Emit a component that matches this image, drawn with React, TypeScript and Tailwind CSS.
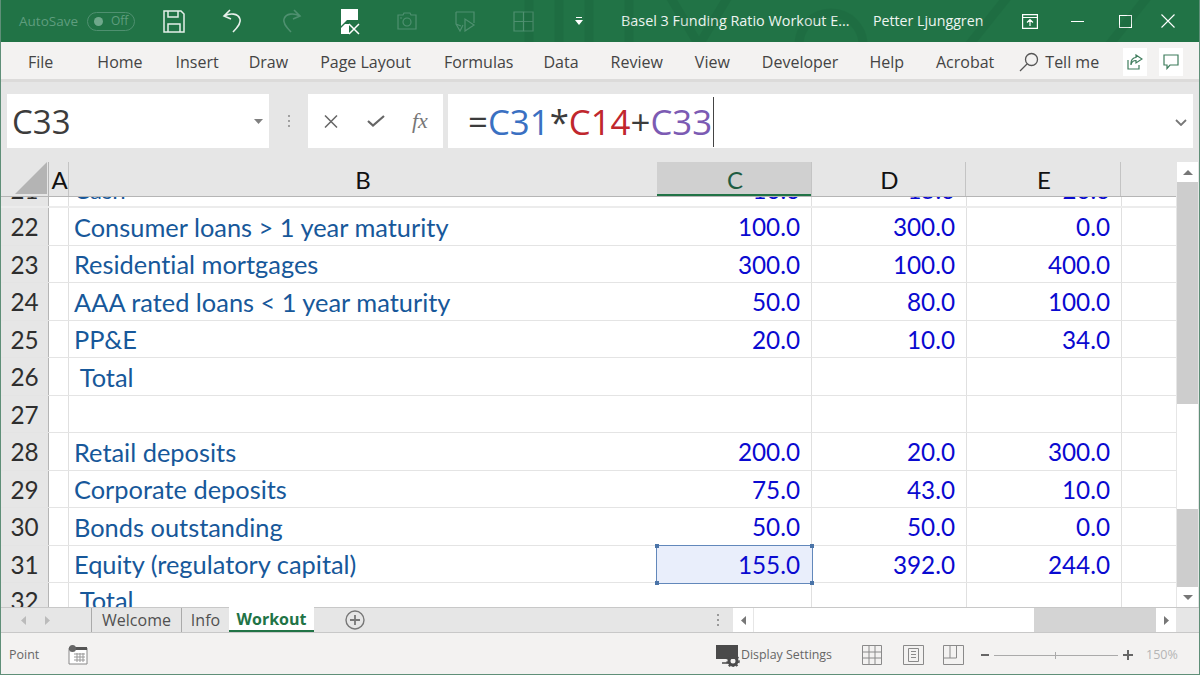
const uiFont = "font-['Open_Sans',sans-serif]";
const cellFont = "font-['Lato',sans-serif]";

const tabs = [
  { label: "File", gap: "mr-[44px]" },
  { label: "Home", gap: "mr-[33px]" },
  { label: "Insert", gap: "mr-[30px]" },
  { label: "Draw", gap: "mr-[32px]" },
  { label: "Page Layout", gap: "mr-[33px]" },
  { label: "Formulas", gap: "mr-[30px]" },
  { label: "Data", gap: "mr-[32px]" },
  { label: "Review", gap: "mr-[32px]" },
  { label: "View", gap: "mr-[32px]" },
  { label: "Developer", gap: "mr-[31px]" },
  { label: "Help", gap: "mr-[32px]" },
  { label: "Acrobat", gap: "mr-[25px]" },
];

const rows = [
  { n: "22", b: "Consumer loans > 1 year maturity", c: "100.0", d: "300.0", e: "0.0" },
  { n: "23", b: "Residential mortgages", c: "300.0", d: "100.0", e: "400.0" },
  { n: "24", b: "AAA rated loans < 1 year maturity", c: "50.0", d: "80.0", e: "100.0" },
  { n: "25", b: "PP&E", c: "20.0", d: "10.0", e: "34.0" },
  { n: "26", b: " Total", c: "", d: "", e: "" },
  { n: "27", b: "", c: "", d: "", e: "" },
  { n: "28", b: "Retail deposits", c: "200.0", d: "20.0", e: "300.0" },
  { n: "29", b: "Corporate deposits", c: "75.0", d: "43.0", e: "10.0" },
  { n: "30", b: "Bonds outstanding", c: "50.0", d: "50.0", e: "0.0" },
  { n: "31", b: "Equity (regulatory capital)", c: "155.0", d: "392.0", e: "244.0", selected: true },
];

function TitleBar() {
  return (
    <div className="relative flex h-[42px] shrink-0 items-center overflow-hidden bg-[#217346] text-white">
      <svg className="absolute right-0 top-0 h-[42px] w-[700px] opacity-[0.12]" viewBox="0 0 700 42" fill="none" stroke="#0d4a2a" strokeWidth="9">
        <path d="M30 -5v50M60 -5v50M90 -5v50M130 -5v50M170 -5l30 50l30 -50M300 45a32 32 0 0 1 64 0M470 45l40 -50M610 45l40 -50" />
      </svg>
      <span className="ml-[18px] w-[64px] text-[13.5px] text-[#5f9d7e]">AutoSave</span>
      <div className="ml-[4px] flex h-[19px] w-[48px] items-center rounded-full border border-[#4f9070] pl-[6px]">
        <span className="h-[9px] w-[9px] rounded-full bg-[#6fa88b]" />
        <span className="ml-[8px] text-[12px] leading-none text-[#5f9d7e]">Off</span>
      </div>
      <svg className="ml-[28px] h-[23px] w-[22px]" viewBox="0 0 22 23" fill="none" stroke="#e4efe9" strokeWidth="1.5">
        <path d="M1 1h17l3 3v18H1z" />
        <path d="M5 1v6h10V1M5 22v-8h12v8" />
      </svg>
      <svg className="ml-[37px] h-[26px] w-[22px]" viewBox="0 0 22 26" fill="none" stroke="#e8f1ec" strokeWidth="1.6">
        <path d="M8 2L2 8l7 3M2 8c6-3 14-3 16 3c1.500 4-3 9-7 13" />
      </svg>
      <svg className="ml-[36px] h-[26px] w-[22px]" viewBox="0 0 22 26" fill="none" stroke="#4f9070" strokeWidth="1.6">
        <path d="M14 2l6 6l-7 3M20 8c-6-3-14-3-16 3c-1.500 4 3 9 7 13" />
      </svg>
      <svg className="ml-[38px] h-[27px] w-[21px]" viewBox="0 0 21 27">
        <path d="M1 1h17v11H7L1 18zM1 20l4-4h4v10H1z" fill="#ffffff" />
        <path d="M9 16l10 10M19 16L9 26" stroke="#ffffff" strokeWidth="1.5" />
      </svg>
      <svg className="ml-[36px] h-[20px] w-[20px]" viewBox="0 0 20 20" fill="none" stroke="#4f9070" strokeWidth="1.2">
        <path d="M1 4h5l1-2h6l1 2h5v14H1z" />
        <circle cx="10" cy="11" r="4" />
        <path d="M3 7h2" />
      </svg>
      <svg className="ml-[38px] h-[21px] w-[21px]" viewBox="0 0 21 21" fill="none" stroke="#4f9070" strokeWidth="1.2">
        <path d="M1 1h18v11M1 1v12l5 2M1 13l4 7l3-6M10 8v12l9-6z" />
      </svg>
      <svg className="ml-[37px] h-[21px] w-[21px]" viewBox="0 0 21 21" fill="none" stroke="#4f9070" strokeWidth="1.2">
        <path d="M1 1h19v19H1zM10.500 1v19M1 10.500h19" />
      </svg>
      <svg className="ml-[41px] h-[8px] w-[8px]" viewBox="0 0 8 8" fill="#ffffff">
        <path d="M1 0h6v1H1zM0 3h8L4 8z" />
      </svg>
      <span className="ml-[38px] w-[252px] text-[14.4px] whitespace-nowrap text-[#eef5f1]">Basel 3 Funding Ratio Workout E...</span>
      <span className="w-[149px] text-[14.2px] whitespace-nowrap text-[#eef5f1]">Petter Ljunggren</span>
      <svg className="h-[15px] w-[16px]" viewBox="0 0 16 15" fill="none" stroke="#ffffff" strokeWidth="1.2">
        <path d="M.6.6h14.800v13.800H.6zM.6 3.500h14.800M8 12V6M5 8.500L8 5.500l3 3" />
      </svg>
      <span className="ml-[33px] h-px w-[13px] bg-white" />
      <span className="ml-[35px] h-[13px] w-[13px] border border-white" />
      <svg className="ml-[29px] h-[14px] w-[14px]" viewBox="0 0 14 14" stroke="#ffffff" strokeWidth="1.1">
        <path d="M.5.5l13 13M13.500.5l-13 13" />
      </svg>
    </div>
  );
}

function RibbonTabs() {
  return (
    <div className="flex h-[40px] shrink-0 items-center border-b-[3px] border-[#dcdbda] bg-[#f3f2f1] pl-[27px] pt-[3px] text-[16px] text-[#444444]">
      {tabs.map((t) => (
        <span key={t.label} className={t.gap}>
          {t.label}
        </span>
      ))}
      <svg className="h-[20px] w-[20px]" viewBox="0 0 20 20" fill="none" stroke="#555555" strokeWidth="1.3">
        <circle cx="12.500" cy="7.500" r="6" />
        <path d="M8 12l-7 7" />
      </svg>
      <span className="ml-[6px] w-[78px]">Tell me</span>
      <div className="flex h-[28px] w-[24px] items-center justify-center bg-white">
        <svg className="h-[16px] w-[16px]" viewBox="0 0 16 16" fill="none" stroke="#3f7d5d" strokeWidth="1.2">
          <path d="M9 1l6 4l-6 4V6.500C6 6.500 4.500 8 4 11C3.500 6 6 3.500 9 3.500zM1 6v9h11v-4" />
        </svg>
      </div>
      <div className="ml-[12px] flex h-[28px] w-[24px] items-center justify-center bg-white">
        <svg className="h-[16px] w-[16px]" viewBox="0 0 16 16" fill="none" stroke="#3f7d5d" strokeWidth="1.2">
          <path d="M1 1h14v10H7l-3 3.500V11H1z" />
        </svg>
      </div>
    </div>
  );
}

function FormulaBar() {
  return (
    <div className="flex h-[80px] shrink-0 bg-[#e6e6e6] pt-[12px] pb-[14px]">
      <div className="ml-[6px] flex w-[262px] items-center bg-white pl-[5px] text-[33px] leading-none text-[#3c3c3c]">
        C33
        <svg className="ml-auto mr-[6px] h-[5px] w-[9px]" viewBox="0 0 9 5" fill="#808080">
          <path d="M0 0h9L4.500 5z" />
        </svg>
      </div>
      <div className="flex w-[39px] flex-col items-center justify-center gap-[3px]">
        <span className="h-[2px] w-[2px] bg-[#a0a0a0]" />
        <span className="h-[2px] w-[2px] bg-[#a0a0a0]" />
        <span className="h-[2px] w-[2px] bg-[#a0a0a0]" />
      </div>
      <div className="flex w-[135px] items-center bg-white">
        <svg className="ml-[16px] h-[13px] w-[14px]" viewBox="0 0 14 13" stroke="#666666" strokeWidth="1.500">
          <path d="M1 .5l12 12M13 .5l-12 12" />
        </svg>
        <svg className="ml-[29px] h-[12px] w-[18px]" viewBox="0 0 18 12" fill="none" stroke="#666666" strokeWidth="2.200">
          <path d="M1 6l5 4.500L17 1" />
        </svg>
        <span className="ml-[27px] font-['Liberation_Serif',serif] text-[22px] leading-none text-[#777777] italic">fx</span>
      </div>
      <div className="ml-[5px] flex w-[745px] items-center bg-white pl-[20px] pt-[2px] text-[34.8px] leading-none text-[#3c3c3c]">
        <span>=</span>
        <span className="text-[#3a70c2]">C31</span>
        <span>*</span>
        <span className="text-[#c0272d]">C14</span>
        <span>+</span>
        <span className="text-[#7c5bb3]">C33</span>
        <span className="ml-px h-[50px] w-px bg-[#444444]" />
        <svg className="ml-auto mr-[6px] h-[7px] w-[12px]" viewBox="0 0 12 7" fill="none" stroke="#777777" strokeWidth="1.800">
          <path d="M1 1l5 5l5-5" />
        </svg>
      </div>
    </div>
  );
}

function ColumnHeaders() {
  return (
    <div className={`flex h-[34px] shrink-0 text-[24px] leading-none text-[#111111] ${cellFont}`}>
      <div className="relative h-full w-[48px] border-r border-[#b5b5b5]">
        <svg className="absolute bottom-[2px] right-[1px] h-[32px] w-[32px]" viewBox="0 0 32 32" fill="#b4b4b4">
          <path d="M32 0v32H0z" />
        </svg>
      </div>
      <div className="flex h-full w-[20px] items-center justify-center border-r border-[#c4c4c4] pl-[2px] pt-[2px]">A</div>
      <div className="flex h-full w-[588px] items-center justify-center pt-[2px]">B</div>
      <div className="flex h-full w-[154px] items-center justify-center border-b-2 border-[#217346] bg-[#d0d0d0] pl-[2px] pt-[3px] text-[#1f5c42]">C</div>
      <div className="flex h-full w-[155px] items-center justify-center border-x border-[#c4c4c4] pl-[2px] pt-[2px]">D</div>
      <div className="flex h-full w-[155px] items-center justify-center border-r border-[#c4c4c4] pl-[2px] pt-[2px]">E</div>
      <div className="h-full w-[54px]" />
    </div>
  );
}

function SheetRow({
  n,
  b,
  c,
  d,
  e,
  selected,
}: {
  n: string;
  b: string;
  c: string;
  d: string;
  e: string;
  selected?: boolean;
}) {
  const num = "flex h-full w-[155px] items-center justify-end border-r border-[#e0e0e0] pr-[11px] pt-[2px] text-[#0a0ad0]";
  return (
    <div className={`flex h-[37.500px] shrink-0 border-b border-[#e4e4e4] text-[24.3px] leading-[36px] ${cellFont}`}>
      <div className="flex h-full w-[48px] items-center justify-center border-r border-[#b5b5b5] bg-[#e6e6e6] pt-[2px] text-[#2e2e2e]">{n}</div>
      <div className="h-full w-[20px] border-r border-[#e0e0e0]" />
      <div className="flex h-full w-[588px] items-center whitespace-pre pl-[5px] pt-[1px] text-[25.4px] text-[#17589a] [font-variant-ligatures:none]">{b}</div>
      {selected ? (
        <div className="relative z-10 flex h-[37.500px] w-[155px] items-center justify-end bg-[#e9eefb] pr-[12px] pt-[2px] text-[#0a0ad0] outline-[1.5px] outline-[#6288bb] outline-solid">
          {c}
          <span className="absolute -left-[2px] -top-[2px] h-[4px] w-[4px] bg-[#4a74a8]" />
          <span className="absolute -right-[2px] -top-[2px] h-[4px] w-[4px] bg-[#4a74a8]" />
          <span className="absolute -bottom-[2px] -left-[2px] h-[4px] w-[4px] bg-[#4a74a8]" />
          <span className="absolute -bottom-[2px] -right-[2px] h-[4px] w-[4px] bg-[#4a74a8]" />
        </div>
      ) : (
        <div className={num}>{c}</div>
      )}
      <div className={num}>{d}</div>
      <div className={num}>{e}</div>
      <div className="h-full w-[53px]" />
    </div>
  );
}

function Sheet() {
  return (
    <div className="flex min-h-0 flex-1 bg-[#e6e6e6]">
      <div className="flex w-[1175px] flex-col">
        <ColumnHeaders />
        <div className="flex min-h-0 flex-1 flex-col overflow-hidden bg-white">
          <div className={`flex h-[12px] shrink-0 overflow-hidden border-b-2 border-t border-b-[#ececec] border-t-[#b5b5b5] text-[24px] leading-none ${cellFont}`}>
            <div className="flex h-[40px] w-[48px] translate-y-[-19px] justify-center border-r border-[#b5b5b5] bg-[#e6e6e6] text-[#2e2e2e]">21</div>
            <div className="h-[40px] w-[20px] border-r border-[#e0e0e0]" />
            <div className="w-[588px] translate-y-[-19px] pl-[5px] text-[#17589a]">Cash</div>
            <div className="h-[40px] w-[155px] translate-y-[-19px] border-r border-[#e0e0e0] pr-[11px] text-right text-[#0a0ad0]">10.0</div>
            <div className="h-[40px] w-[155px] translate-y-[-19px] border-r border-[#e0e0e0] pr-[11px] text-right text-[#0a0ad0]">15.0</div>
            <div className="h-[40px] w-[155px] translate-y-[-19px] border-r border-[#e0e0e0] pr-[11px] text-right text-[#0a0ad0]">20.0</div>
          </div>
          {rows.map((r) => (
            <SheetRow key={r.n} {...r} />
          ))}
          <div className={`flex h-[24px] shrink-0 overflow-hidden text-[24.3px] leading-none ${cellFont}`}>
            <div className="w-[48px] border-r border-[#b5b5b5] bg-[#e6e6e6] pt-[6px] text-center text-[#2e2e2e]">32</div>
            <div className="w-[20px] border-r border-[#e0e0e0]" />
            <div className="w-[588px] whitespace-pre pl-[5px] pt-[5px] text-[25.4px] text-[#17589a]"> Total</div>
            <div className="w-[155px] border-r border-[#e0e0e0]" />
            <div className="w-[155px] border-r border-[#e0e0e0]" />
            <div className="w-[155px] border-r border-[#e0e0e0]" />
          </div>
        </div>
      </div>
      <div className="ml-[1px] flex w-[21px] flex-col bg-[#cdcdcd]">
        <div className="flex h-[20px] items-center justify-center bg-white">
          <svg className="h-[5px] w-[10px]" viewBox="0 0 10 5" fill="#777777">
            <path d="M5 0l5 5H0z" />
          </svg>
        </div>
        <div className="h-[222px]" />
        <div className="h-[105px] bg-white" />
        <div className="flex-1" />
        <div className="flex h-[20px] items-center justify-center bg-white">
          <svg className="h-[5px] w-[10px]" viewBox="0 0 10 5" fill="#777777">
            <path d="M0 0h10L5 5z" />
          </svg>
        </div>
      </div>
    </div>
  );
}

function SheetTabs() {
  return (
    <div className="flex h-[26px] shrink-0 items-stretch border-y border-[#c8c8c8] bg-[#e6e6e6] text-[16px]">
      <div className="flex w-[91px] items-center gap-[19px] border-r border-[#aaaaaa] pl-[20px]">
        <svg className="h-[9px] w-[5px]" viewBox="0 0 5 9" fill="#bbbbbb"><path d="M5 0v9L0 4.500z" /></svg>
        <svg className="h-[9px] w-[5px]" viewBox="0 0 5 9" fill="#bbbbbb"><path d="M0 0v9l5-4.500z" /></svg>
      </div>
      <div className="flex w-[90px] items-center justify-center border-r border-[#aaaaaa] text-[#505050]">Welcome</div>
      <div className="flex w-[47px] items-center justify-center text-[#505050]">Info</div>
      <div className="-mt-px flex w-[85px] items-center justify-center border-b-2 border-[#217346] bg-white font-bold text-[#217346]">Workout</div>
      <svg className="ml-[31px] mt-[2px] h-[20px] w-[20px]" viewBox="0 0 20 20" fill="none" stroke="#777777" strokeWidth="1.400">
        <circle cx="10" cy="10" r="9" />
        <path d="M10 5v10M5 10h10" strokeWidth="1.800" />
      </svg>
      <div className="ml-[344px] flex w-[18px] flex-col items-center justify-center gap-[3px]">
        <span className="h-[2px] w-[2px] bg-[#999999]" />
        <span className="h-[2px] w-[2px] bg-[#999999]" />
        <span className="h-[2px] w-[2px] bg-[#999999]" />
      </div>
      <div className="ml-[6px] flex w-[20px] items-center justify-center bg-white">
        <svg className="h-[9px] w-[5px]" viewBox="0 0 5 9" fill="#777777"><path d="M5 0v9L0 4.500z" /></svg>
      </div>
      <div className="ml-px w-[280px] bg-white" />
      <div className="w-[122px] bg-[#d4d4d4]" />
      <div className="flex w-[20px] items-center justify-center bg-white">
        <svg className="h-[9px] w-[5px]" viewBox="0 0 5 9" fill="#777777"><path d="M0 0v9l5-4.500z" /></svg>
      </div>
    </div>
  );
}

function StatusBar() {
  return (
    <div className="flex h-[41px] shrink-0 items-center bg-[#f3f2f1] pt-[3px] text-[#666666]">
      <span className="ml-[8px] w-[59px] text-[12.500px]">Point</span>
      <svg className="h-[20px] w-[20px]" viewBox="0 0 20 20">
        <path d="M1 3h18v16H1z" fill="#ffffff" stroke="#888888" />
        <path d="M1 2h18v3H1z" fill="#555555" />
        <circle cx="4.500" cy="3.500" r="3.500" fill="#666666" />
        <path d="M6 9h11M6 12h11M6 15h11M9 8v9M12 8v9M15 8v9" stroke="#999999" />
      </svg>
      <svg className="ml-[628px] h-[23px] w-[24px]" viewBox="0 0 24 23">
        <path d="M0 1h22v14H0z" fill="#4a4a4a" />
        <path d="M6 19h8" stroke="#4a4a4a" strokeWidth="1.500" />
        <circle cx="17" cy="17" r="4" fill="none" stroke="#4a4a4a" strokeWidth="3" />
        <circle cx="17" cy="17" r="6" fill="none" stroke="#4a4a4a" strokeWidth="1.500" strokeDasharray="2 2" />
      </svg>
      <span className="ml-px w-[121px] text-[12.4px] whitespace-nowrap">Display Settings</span>
      <svg className="h-[20px] w-[20px]" viewBox="0 0 20 20" fill="none" stroke="#8a8a8a">
        <path d="M.5.5h19v19H.5zM7 .5v19M13 .5v19M.5 7h19M.5 13h19" />
      </svg>
      <svg className="ml-[21px] h-[20px] w-[21px]" viewBox="0 0 21 20" fill="none" stroke="#8a8a8a">
        <path d="M.5.5h20v19H.5zM5.500 3.500h10v13h-10zM8 6.500h5M8 9.500h5M8 12.500h5" />
      </svg>
      <svg className="ml-[19px] h-[20px] w-[21px]" viewBox="0 0 21 20" fill="none" stroke="#8a8a8a">
        <path d="M.5.5h20v19H.5zM.5 13h13V.5M7 .5V13" />
      </svg>
      <span className="ml-[17px] h-[2px] w-[8px] bg-[#666666]" />
      <div className="relative ml-[5px] h-px w-[124px] bg-[#aaaaaa]">
        <span className="absolute left-[61px] top-[-3px] h-[7px] w-px bg-[#aaaaaa]" />
      </div>
      <svg className="ml-[5px] h-[10px] w-[10px]" viewBox="0 0 10 10" stroke="#666666" strokeWidth="2">
        <path d="M5 0v10M0 5h10" />
      </svg>
      <span className="ml-[13px] text-[12.500px] text-[#b5b5b5]">150%</span>
    </div>
  );
}

export default function App() {
  return (
    <div className={`flex h-screen w-full flex-col overflow-hidden border-x border-b border-[#5f8f78] ${uiFont}`}>
      <TitleBar />
      <RibbonTabs />
      <FormulaBar />
      <Sheet />
      <SheetTabs />
      <StatusBar />
    </div>
  );
}
